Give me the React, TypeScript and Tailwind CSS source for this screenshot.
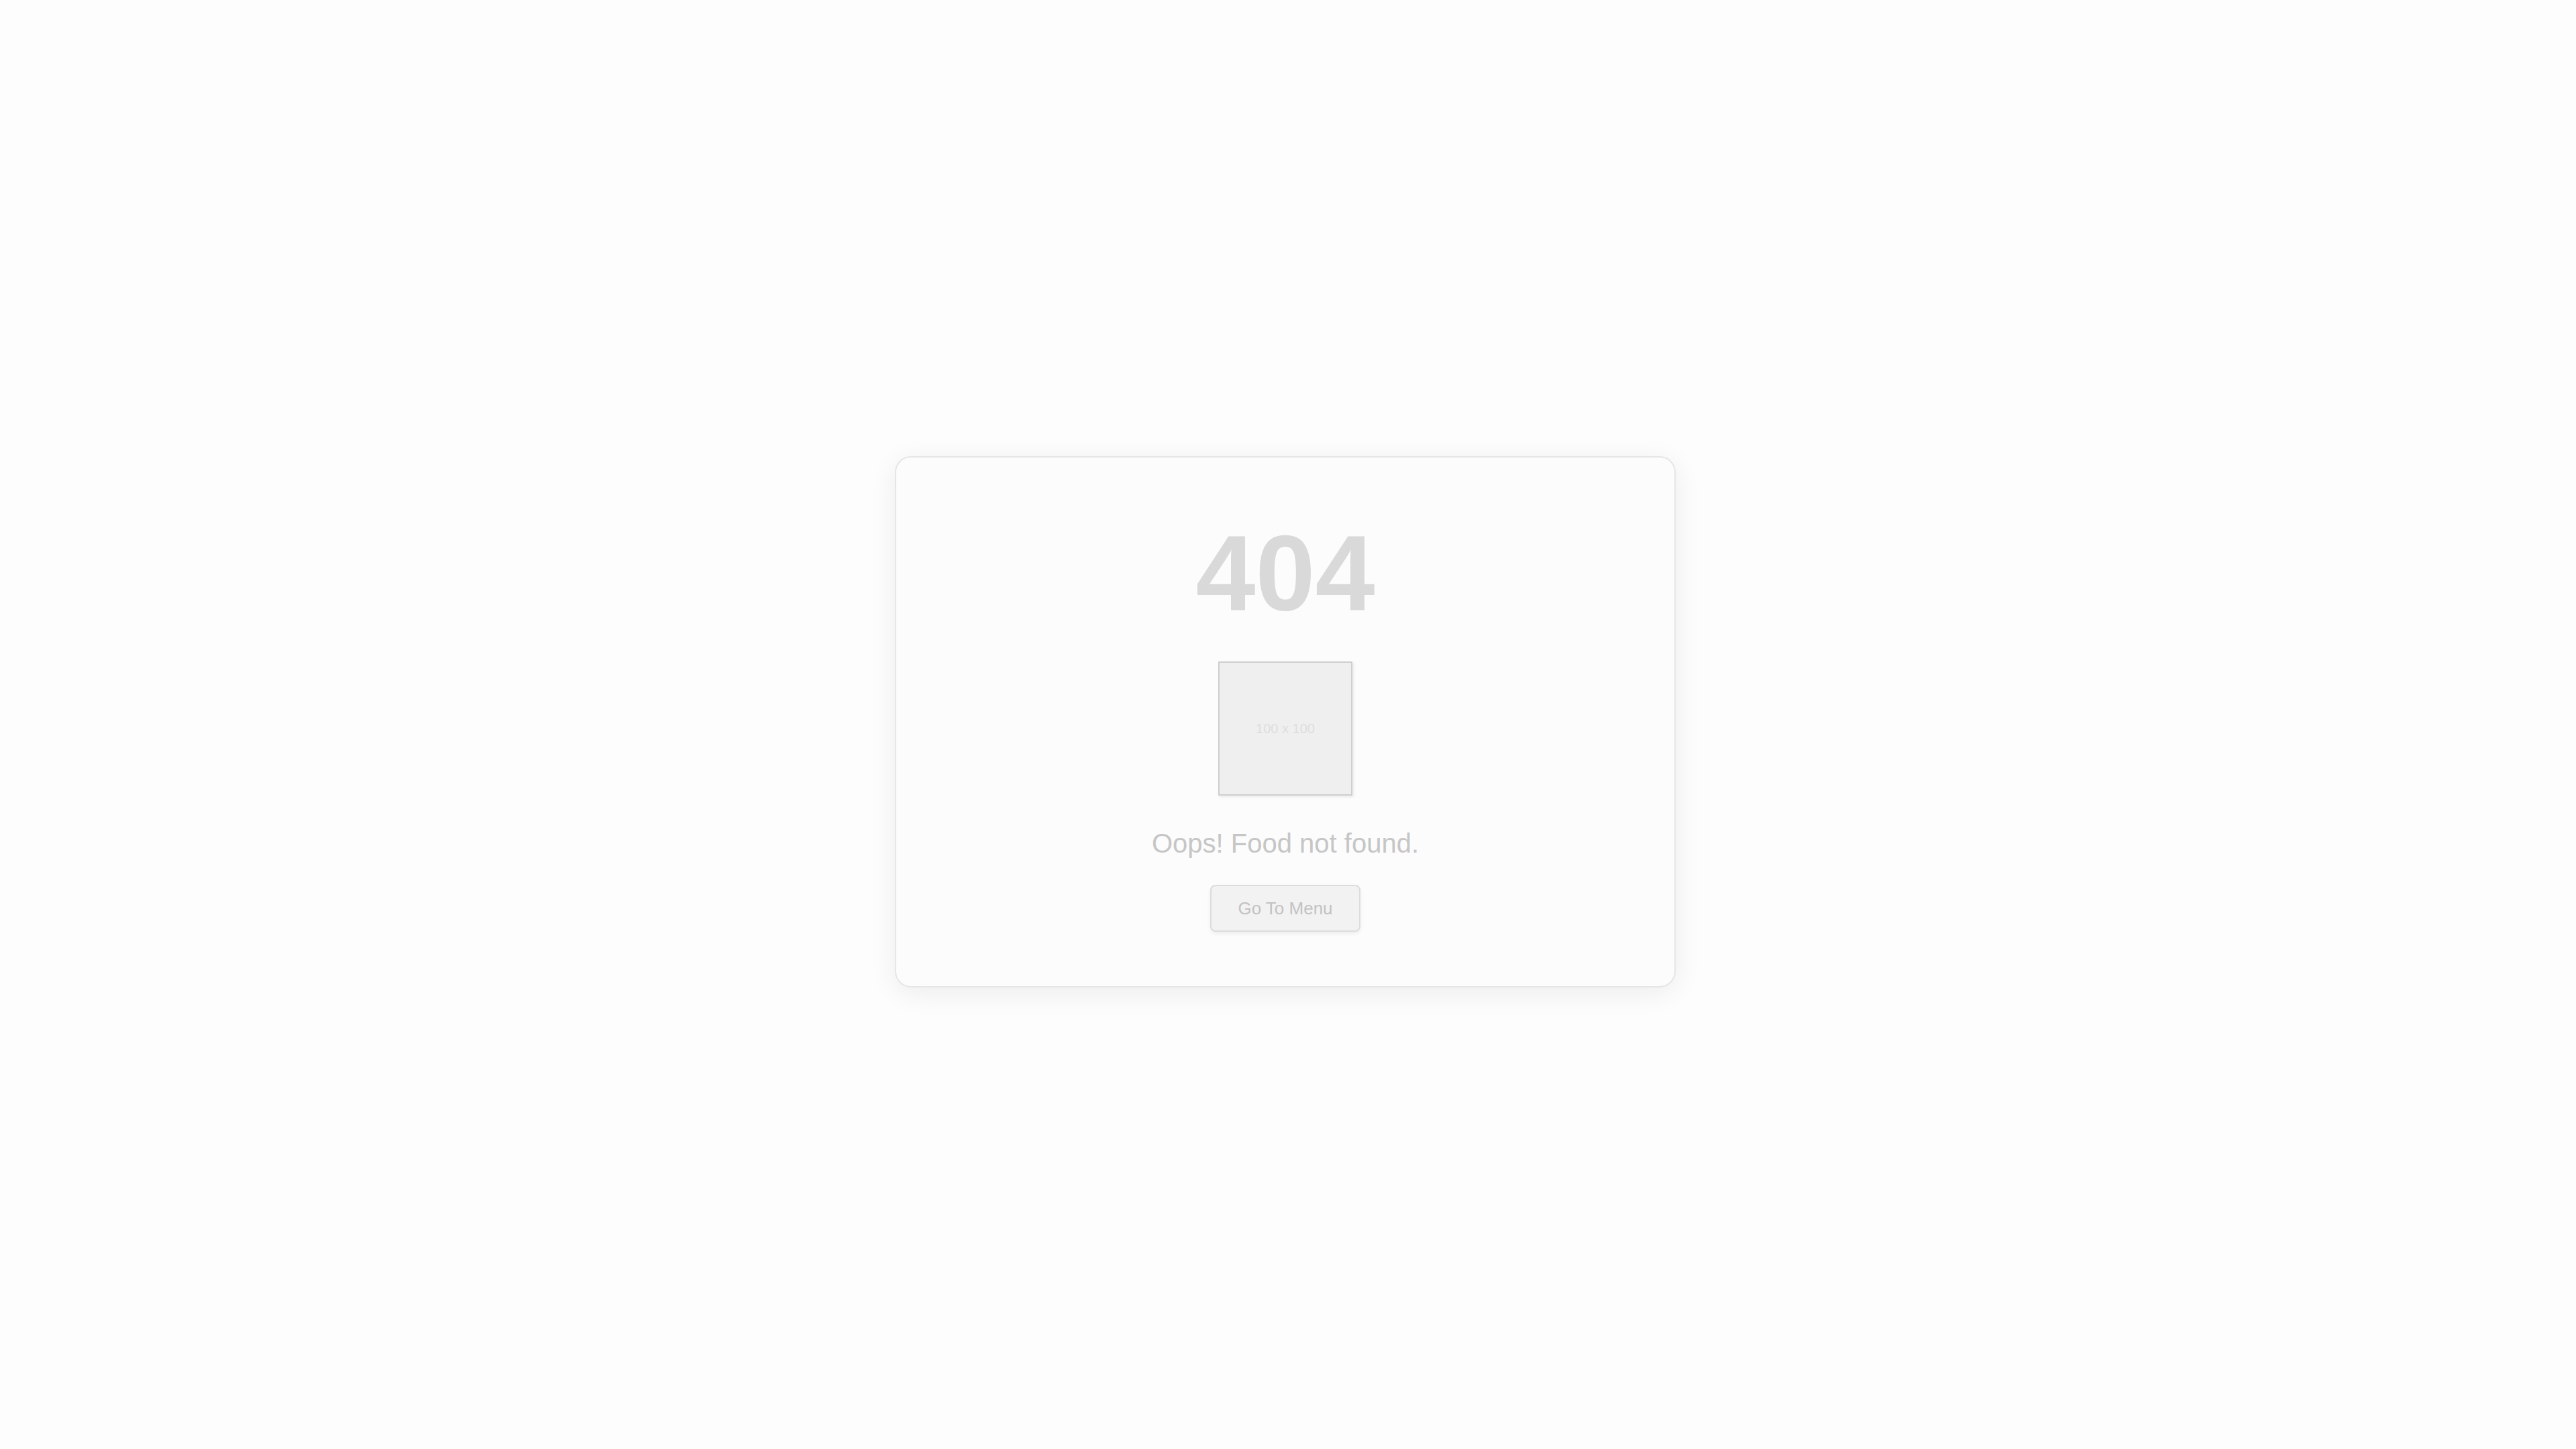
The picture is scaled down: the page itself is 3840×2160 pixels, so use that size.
import React from "react";

export default function App() {
  return (
    <div
      className="min-h-screen w-full flex items-center justify-center bg-[#fdfdfd] pr-[8px] pb-[8px]"
      style={{ fontFamily: '"Liberation Sans", Arial, sans-serif' }}
    >
      <div className="w-[1164px] flex flex-col items-center rounded-[24px] border-2 border-[#e6e6e6] bg-[#fcfcfc] pt-[92px] pb-[81px] shadow-[0_8px_40px_rgba(0,0,0,0.07)]">
        <h1 className="text-[160px] leading-[160px] font-bold text-[#d9d9d9] m-0">404</h1>
        <div className="mt-[52px] w-[200px] h-[200px] flex items-center justify-center bg-[#efefef] border-2 border-[#cfcfcf] shadow-[2px_2px_4px_rgba(0,0,0,0.08)]">
          <span className="text-[20px] text-[#dedede]">100 x 100</span>
        </div>
        <p className="mt-[43px] text-[40px] leading-[56px] text-[#c6c6c6]">Oops! Food not found.</p>
        <button className="mt-[34px] w-[224px] h-[70px] flex items-center justify-center rounded-[8px] border-2 border-[#dcdcdc] bg-[#f2f2f2] text-[26px] text-[#c2c2c2] shadow-[0_3px_6px_rgba(0,0,0,0.06)]">
          Go To Menu
        </button>
      </div>
    </div>
  );
}
